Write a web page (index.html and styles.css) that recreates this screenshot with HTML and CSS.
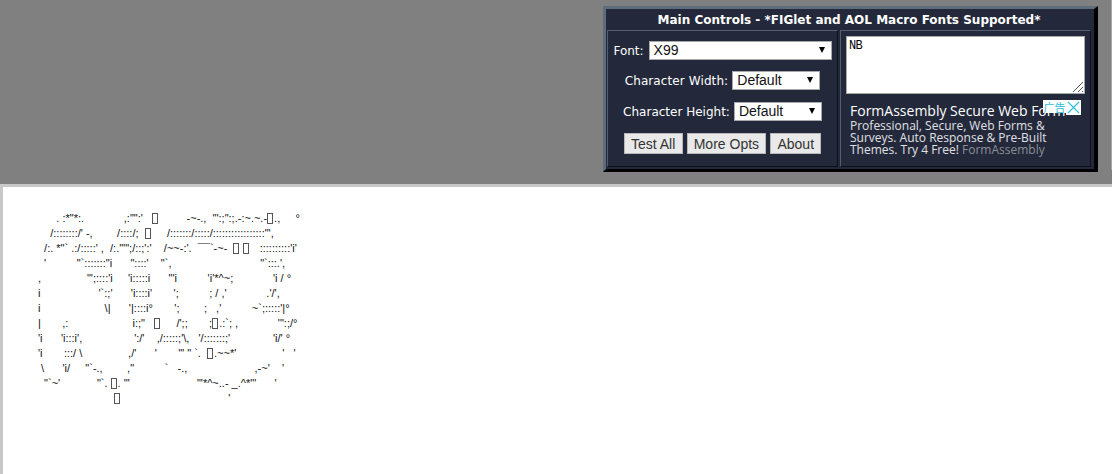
FILE: index.html
```html
<!DOCTYPE html>
<html lang="en">
<head>
  <meta charset="UTF-8">
  <title>Text ASCII Art Generator</title>
  <link rel="stylesheet" href="styles.css">
</head>
<body>
  <!-- Top frame -->
  <div class="top-frame">
    <div class="panel">
      <h1 class="panel-title">Main Controls - *FIGlet and AOL Macro Fonts Supported*</h1>
      <div class="panel-cells">
        <div class="cell cell-left">
          <div class="row row-font">
            <label class="row-label">Font:</label>
            <div class="fake-select select-font">X99</div>
          </div>
          <div class="row row-width">
            <label class="row-label">Character Width:</label>
            <div class="fake-select select-size">Default</div>
          </div>
          <div class="row">
            <label class="row-label">Character Height:</label>
            <div class="fake-select select-size">Default</div>
          </div>
          <div class="row row-buttons">
            <button type="button">Test All</button>
            <button type="button">More Opts</button>
            <button type="button">About</button>
          </div>
        </div>
        <div class="cell cell-right">
          <div class="text-box">NB
            <svg class="grip" width="12" height="12" viewBox="0 0 12 12"><path d="M1 11 11 1M6 11l5-5M10 11l1-1" stroke="#555" fill="none"/></svg>
          </div>
          <div class="ad">
            <div class="ad-title">FormAssembly Secure Web Form</div>
            <div class="ad-text">Professional, Secure, Web Forms &amp; Surveys. Auto Response &amp; Pre-Built Themes. Try 4 Free! <span class="ad-link">FormAssembly</span></div>
            <div class="ad-badge">
              <span class="ad-badge-text">广告</span>
              <svg width="15" height="15" viewBox="0 0 15 15"><path d="M2 2 13 13M13 2 2 13" stroke="#2fc0d8" stroke-width="1.2" fill="none"/></svg>
            </div>
          </div>
        </div>
      </div>
    </div>
  </div>

  <!-- Output frame -->
  <div class="output-frame">
<pre class="art">      . :*"*:.             ,:"":'   <span class="box">□</span>         -~-.,  "':;":;.-:~.~.-<span class="box">□</span>.,     °
    /::::::::/' -,        /::::/;  <span class="box">□</span>     /:::::::/:::::/:::::::::::::::::"',
  /:. *"` .:/:::::' ,  /:.'"";/::;':'    /~~-:'.  ¯¯`-~-  <span class="box">□</span> <span class="box">□</span>   ::::::::::'i'
  '          "`:::::::"i      "::::'    "`,                             "`:::.',
,               "';::::'i     'i:::::i      "'i          'i'*^~;             'i / °
i                   '`:;'      'i::::i'       ';          ; / ,'             .'/',
i                     \|      '|::::i°       ';        ;   ,'          ~`;:::::'|°
|       ,:                     i:;"   <span class="box">□</span>     /';;       ;<span class="box">□</span>.:`; ,             '":;/°
'i      'i:::i',                 ':/'    ,/:::::;'\,   '/:::::::;'              'i/' °
'i       :::/ \               ,/'      '       '" " `.  <span class="box">□</span>.~~*'               '   '
 \      'i/     "`-.,        ,"          `   -.,                      ,-~'    '
  "`~'            "`. <span class="box">□</span>. '"                      "'*^~..- _.^*"'      '
                         <span class="box">□</span>                                   '</pre>
  </div>
</body>
</html>
```

FILE: styles.css
```css
/* Page */
html, body {
  margin: 0;
  padding: 0;
  height: 100%;
}

body {
  display: flex;
  flex-direction: column;
  background: #ffffff;
  overflow: hidden;
}

/* Top frame */
.top-frame {
  position: relative;
  flex: none;
  height: 184px;
  padding: 6px 14px 0 0;
  box-sizing: border-box;
  background: #808080;
  display: flex;
  justify-content: flex-end;
  align-items: flex-start;
}

.top-frame::after {
  content: "";
  position: absolute;
  top: 0;
  right: 0;
  width: 1px;
  height: 170px;
  background: #a8a8a8;
}

.panel {
  width: 495px;
  height: 166px;
  box-sizing: border-box;
  background: #23293b;
  border: 3px solid;
  border-color: #5d6d7b #000000 #000000 #5d6d7b;
  border-right-width: 4px;
  padding: 0 3px 2px 1px;
  display: flex;
  flex-direction: column;
}

.panel-title {
  margin: 0;
  height: 21px;
  line-height: 22px;
  text-align: center;
  font-family: "DejaVu Sans", sans-serif;
  font-size: 12px;
  font-weight: bold;
  color: #ffffff;
}

.panel-cells {
  flex: 1;
  display: flex;
  gap: 2px;
}

.cell {
  box-sizing: border-box;
  border: 1px solid;
  border-color: #565d6e #0c0f18 #0c0f18 #565d6e;
}

/* Left cell */
.cell-left {
  width: 231px;
  padding-top: 10px;
  display: flex;
  flex-direction: column;
  align-items: center;
  gap: 12px;
}

.row {
  display: flex;
  align-items: center;
  gap: 4px;
  height: 19px;
}

.row-font {
  gap: 5px;
}

.row-width {
  margin-top: -1px;
  letter-spacing: 0.1px;
}

.row-label {
  font-family: "DejaVu Sans", sans-serif;
  font-size: 12px;
  color: #ffffff;
  white-space: nowrap;
}

.fake-select {
  position: relative;
  box-sizing: border-box;
  height: 19px;
  line-height: 17px;
  padding-left: 4px;
  background: #ffffff;
  border: 1px solid #a9a9a9;
  font-family: "Liberation Sans", sans-serif;
  font-size: 14px;
  letter-spacing: 0;
  color: #111111;
}

.fake-select::after {
  content: "";
  position: absolute;
  right: 6px;
  top: 5px;
  border-left: 3px solid transparent;
  border-right: 3px solid transparent;
  border-top: 6px solid #000000;
}

.select-font {
  width: 183px;
}

.select-size {
  width: 88px;
}

.row-buttons {
  height: 21px;
}

.row-buttons button {
  height: 21px;
  padding: 0 6.2px;
  background: #e9e9e9;
  border: 1px solid #b8b8b8;
  font-family: "Liberation Sans", sans-serif;
  font-size: 14px;
  color: #333333;
}

/* Right cell */
.cell-right {
  width: 251px;
  position: relative;
  padding: 5px 5px 0;
}

.text-box {
  position: relative;
  box-sizing: border-box;
  height: 58px;
  padding: 2px;
  background: #ffffff;
  border: 1px solid #a9a9a9;
  font-family: "Liberation Mono", monospace;
  font-size: 12px;
  letter-spacing: -0.7px;
  color: #000000;
}

.grip {
  position: absolute;
  right: 0;
  bottom: 0;
}

.ad {
  padding: 8px 3px 0 4px;
  font-family: "Open Sans", sans-serif;
  color: #ffffff;
}

.ad-title {
  font-size: 14px;
  line-height: 18px;
  white-space: nowrap;
}

.ad-text {
  width: 210px;
  font-size: 12px;
  line-height: 12px;
  color: #e0e0e4;
}

.ad-link {
  color: #8d8f97;
}

.ad-badge {
  position: absolute;
  top: 69px;
  right: 9px;
  display: flex;
  align-items: flex-start;
}

.ad-badge-text {
  width: 23px;
  height: 13px;
  background: #ffffff;
  color: #2fc0d8;
  font-family: "Noto Sans CJK SC", sans-serif;
  font-size: 11px;
  line-height: 14px;
  text-align: center;
}

.ad-badge svg {
  display: block;
  background: #ffffff;
}

/* Output frame */
.output-frame {
  flex: 1;
  background: #ffffff;
  border-top: 3px solid #c8c8c8;
  border-left: 3px solid #c8c8c8;
}

.art {
  margin: 24px 0 0 35px;
  font-family: "Liberation Sans", sans-serif;
  font-size: 11px;
  line-height: 15px;
  color: #111111;
}

/* Missing-glyph boxes in the art */
.box {
  display: inline-block;
  box-sizing: border-box;
  width: 6px;
  height: 11px;
  margin-right: 1px;
  vertical-align: -2px;
  border: 1px solid #555555;
  overflow: hidden;
  color: transparent;
  line-height: 9px;
}
```
